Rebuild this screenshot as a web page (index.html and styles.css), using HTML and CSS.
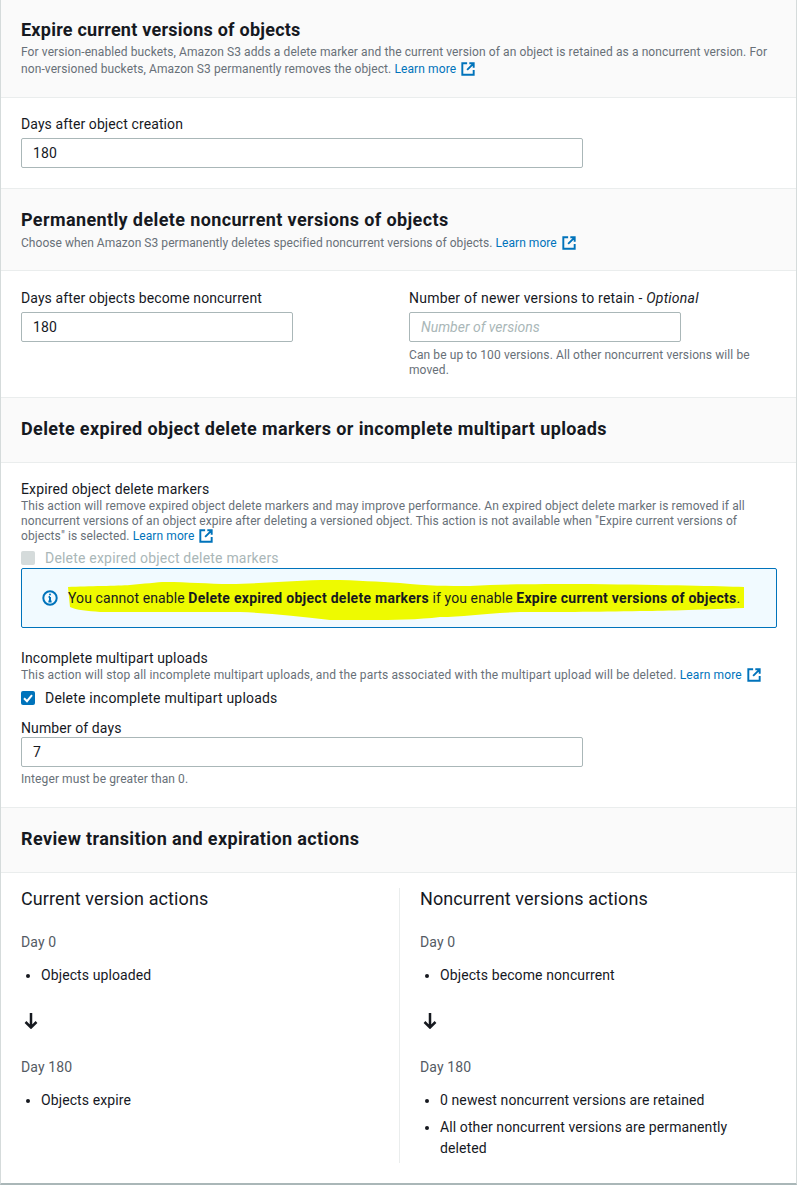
FILE: index.html
```html
<!DOCTYPE html>
<html lang="en">
<head>
  <meta charset="UTF-8">
  <title>Lifecycle rule actions</title>
  <link rel="stylesheet" href="styles.css">
</head>
<body>
  <div class="card">
    <div class="head head-one">
      <h2>Expire current versions of objects</h2>
      <p class="desc">For version-enabled buckets, Amazon S3 adds a delete marker and the current version of an object is retained as a noncurrent version. For non-versioned buckets, Amazon S3 permanently removes the object. <a href="#">Learn more <svg class="ext" viewBox="0 0 16 16"><path d="M7 1.5H1.500v13h13V9M9.500 1.500h5v5M14.500 1.500L7 9"/></svg></a></p>
    </div>
    <div class="section sec-one">
      <label>Days after object creation</label>
      <div class="input wide">180</div>
    </div>

    <div class="head head-two">
      <h2>Permanently delete noncurrent versions of objects</h2>
      <p class="desc">Choose when Amazon S3 permanently deletes specified noncurrent versions of objects. <a href="#">Learn more <svg class="ext" viewBox="0 0 16 16"><path d="M7 1.5H1.500v13h13V9M9.500 1.500h5v5M14.500 1.500L7 9"/></svg></a></p>
    </div>
    <div class="section sec-two">
      <div class="field-col">
        <label>Days after objects become noncurrent</label>
        <div class="input narrow">180</div>
      </div>
      <div class="field-col">
        <label>Number of newer versions to retain - <i>Optional</i></label>
        <div class="input narrow placeholder">Number of versions</div>
        <p class="hint">Can be up to 100 versions. All other noncurrent versions will be moved.</p>
      </div>
    </div>

    <div class="head head-three">
      <h2>Delete expired object delete markers or incomplete multipart uploads</h2>
    </div>
    <div class="section sec-three">
      <label class="tight">Expired object delete markers</label>
      <p class="desc">This action will remove expired object delete markers and may improve performance. An expired object delete marker is removed if all noncurrent versions of an object expire after deleting a versioned object. This action is not available when "Expire current versions of objects" is selected. <a href="#">Learn more <svg class="ext" viewBox="0 0 16 16"><path d="M7 1.5H1.500v13h13V9M9.500 1.500h5v5M14.500 1.500L7 9"/></svg></a></p>
      <div class="check disabled"><span class="box"></span>Delete expired object delete markers</div>
      <div class="alert">
        <svg class="marker" viewBox="0 0 680 42" preserveAspectRatio="none"><path d="M0 8C20 7 50 7 62 6C75 5 90 3 97 3C120 3 140 5 162 5C190 5 230 1 262 1C290 1 310 3 332 4C360 7 380 7 402 7C440 5 470 5 522 5C600 6 650 7 676 8L676 29C630 31 590 32 572 32C530 33 480 33 452 33C420 34 395 38 372 38C340 42 300 41 262 41C230 37 200 34 172 33C130 33 70 33 32 33C20 32 8 31 2 28Z"/></svg>
        <svg class="info" viewBox="0 0 16 16"><circle cx="8" cy="8" r="6.700"/><path d="M8 7v4.600M6.400 11.600h3.200M6.600 7h1.400"/><circle class="dot" cx="8" cy="4.600" r="1"/></svg>
        <span class="alert-text">You cannot enable <b>Delete expired object delete markers</b> if you enable <b>Expire current versions of objects</b>.</span>
      </div>
      <label class="tight second">Incomplete multipart uploads</label>
      <p class="desc desc-wider">This action will stop all incomplete multipart uploads, and the parts associated with the multipart upload will be deleted. <a href="#">Learn more <svg class="ext" viewBox="0 0 16 16"><path d="M7 1.5H1.500v13h13V9M9.500 1.500h5v5M14.500 1.500L7 9"/></svg></a></p>
      <div class="check enabled"><span class="box on"><svg viewBox="0 0 14 14"><path d="M3 7.200l3 3 5-6"/></svg></span>Delete incomplete multipart uploads</div>
      <label class="days">Number of days</label>
      <div class="input wide">7</div>
      <p class="hint">Integer must be greater than 0.</p>
    </div>

    <div class="head head-four">
      <h2>Review transition and expiration actions</h2>
    </div>
    <div class="review">
      <div class="col">
        <h3>Current version actions</h3>
        <div class="day">Day 0</div>
        <ul><li>Objects uploaded</li></ul>
        <svg class="arrow" viewBox="0 0 14 16"><path d="M7 0v14.500M1.500 9L7 14.500 12.500 9"/></svg>
        <div class="day">Day 180</div>
        <ul><li>Objects expire</li></ul>
      </div>
      <div class="col col-right">
        <h3>Noncurrent versions actions</h3>
        <div class="day">Day 0</div>
        <ul><li>Objects become noncurrent</li></ul>
        <svg class="arrow" viewBox="0 0 14 16"><path d="M7 0v14.500M1.500 9L7 14.500 12.500 9"/></svg>
        <div class="day">Day 180</div>
        <ul>
          <li>0 newest noncurrent versions are retained</li>
          <li>All other noncurrent versions are permanently deleted</li>
        </ul>
      </div>
    </div>
  </div>
</body>
</html>
```

FILE: styles.css
```css
* {
  box-sizing: border-box;
}
body {
  margin: 0;
  font-family: Roboto, Arial, sans-serif;
  font-size: 14px;
  line-height: 20px;
  letter-spacing: 0.1px;
  color: #16191f;
  background: #fff;
}
.card {
  width: 797px;
  height: 1185px;
  border-left: 1px solid #d5dbdb;
  border-right: 1px solid #d5dbdb;
  border-bottom: 2px solid #aab7b8;
}
.head {
  background: #fafafa;
  padding: 20px 20px 0;
  border-top: 1px solid #eaeded;
  border-bottom: 1px solid #eaeded;
}
.head h2 {
  margin: 0;
  font-size: 18px;
  line-height: 22px;
  font-weight: 700;
  letter-spacing: 0.38px;
}
.head-one {
  height: 98px;
  padding-top: 19px;
  border-top: none;
}
.head-one h2 {
  letter-spacing: 0.24px;
}
.head-two {
  height: 83px;
}
.head-three {
  height: 66px;
}
.head-four {
  height: 66px;
}
.desc {
  margin: 3px 0 0;
  font-size: 12px;
  line-height: 17px;
  color: #687078;
}
.head-two .desc {
  margin-top: 4px;
  letter-spacing: 0.05px;
}
.desc a {
  color: #0073bb;
  text-decoration: none;
}
.ext {
  width: 14px;
  height: 14px;
  margin-left: 2px;
  vertical-align: -3px;
  fill: none;
  stroke: #0073bb;
  stroke-width: 2.200;
}
.section {
  padding: 16px 20px;
}
label {
  display: block;
  height: 24px;
}
.field-col:last-child label {
  letter-spacing: 0.22px;
}
.input {
  height: 30px;
  border: 1px solid #aab7b8;
  border-radius: 2px;
  padding: 0 11px;
  line-height: 28px;
  background: #fff;
}
.wide {
  width: 562px;
}
.narrow {
  width: 272px;
}
.placeholder {
  font-style: italic;
  letter-spacing: 0;
  color: #aab7b8;
}
.hint {
  margin: 5px 0 0;
  font-size: 12px;
  line-height: 15px;
  color: #687078;
}
.sec-one {
  height: 90px;
}
.sec-two {
  height: 126px;
  display: flex;
  gap: 116px;
  padding-top: 17px;
}
.sec-two .hint {
  margin-top: 6px;
}
.field-col {
  width: 272px;
}
.field-col:last-child {
  width: 350px;
}
.sec-three {
  height: 344px;
}
label.tight {
  height: 20px;
  letter-spacing: 0.14px;
}
label.second {
  margin-top: 20px;
}
.sec-three .desc {
  margin: 0;
  line-height: 15px;
}
.sec-three .desc-wider {
  letter-spacing: 0.15px;
}
.check {
  display: flex;
  align-items: center;
  gap: 10px;
  height: 20px;
  margin-top: 4px;
  letter-spacing: 0.2px;
}
.enabled {
  margin-top: 5px;
}
.disabled {
  color: #aab7b8;
}
.box {
  width: 14px;
  height: 14px;
  border-radius: 2px;
  background: #d5dbdb;
}
.box.on {
  background: #0073bb;
}
.box svg {
  display: block;
  fill: none;
  stroke: #fff;
  stroke-width: 2;
}
.alert {
  position: relative;
  display: flex;
  align-items: center;
  gap: 10px;
  width: 756px;
  height: 60px;
  padding-left: 20px;
  border: 1px solid #0073bb;
  border-radius: 2px;
  background: #f1faff;
}
.alert b {
  letter-spacing: 0.27px;
}
.marker {
  position: absolute;
  left: 46px;
  top: 10px;
  width: 680px;
  height: 42px;
  fill: #eefa00;
}
.info {
  position: relative;
  width: 16px;
  height: 16px;
  flex: none;
  fill: none;
  stroke: #0073bb;
  stroke-width: 2;
}
.info .dot {
  fill: #0073bb;
  stroke: none;
}
.alert-text {
  position: relative;
  white-space: nowrap;
}
.days {
  margin-top: 10px;
  height: 19px;
}
.review {
  display: flex;
  padding: 15px 0 0 20px;
}
.col {
  width: 378px;
  height: 275px;
}
.col-right {
  border-left: 1px solid #eaeded;
  padding: 0 40px 0 20px;
  width: 378px;
}
.col h3 {
  margin: 0;
  font-size: 18px;
  line-height: 22px;
  font-weight: 400;
}
.day {
  margin-top: 22px;
  color: #545b64;
}
ul {
  margin: 13px 0 0;
  padding: 0 0 0 20px;
}
li {
  margin-bottom: 6px;
  line-height: 21px;
}
.arrow {
  display: block;
  width: 14px;
  height: 16px;
  margin: 27px 0 28px 3px;
  fill: none;
  stroke: #16191f;
  stroke-width: 2.500;
}
```
